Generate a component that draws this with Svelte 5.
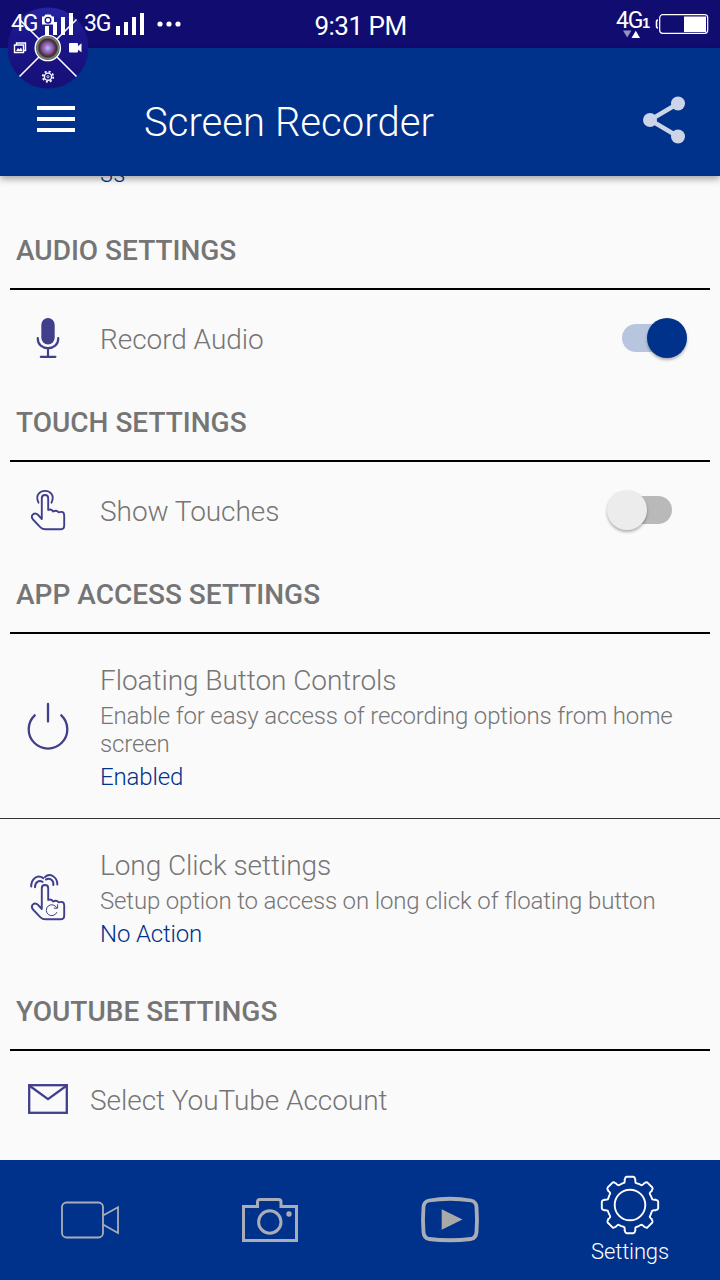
<script lang="ts">
  let recordAudio = $state(true);
  let showTouches = $state(false);

  const signalBars = [9, 13, 18, 22];

  function point(radius: number, degrees: number) {
    const a = (degrees * Math.PI) / 180;
    return `${(30 + radius * Math.cos(a)).toFixed(2)} ${(30 + radius * Math.sin(a)).toFixed(2)}`;
  }

  function gearPath(outer: number, root: number) {
    let d = '';
    for (let i = 0; i < 8; i++) {
      const a = i * 45 - 90;
      d += `${i ? 'L' : 'M'}${point(root, a - 14)} Q${point(root + 1.5, a - 12)} ${point(root + 3, a - 12)}`;
      d += `L${point(outer - 2, a - 11)} Q${point(outer, a - 10)} ${point(outer, a - 7)}`;
      d += `L${point(outer, a + 7)} Q${point(outer, a + 10)} ${point(outer - 2, a + 11)}`;
      d += `L${point(root + 3, a + 12)} Q${point(root + 1.5, a + 12)} ${point(root, a + 14)}`;
      d += `Q${point(root - 0.5, a + 17)} ${point(root - 0.2, a + 22.5)}`;
    }
    return d + 'Z';
  }

  const gear = gearPath(28.4, 23);
</script>

{#snippet signal()}
  <svg class="signal" width="28" height="22" viewBox="0 0 28 22" fill="#fff">
    {#each signalBars as h, i}
      <rect x={i * 8} y={22 - h} width="4" height={h} />
    {/each}
  </svg>
{/snippet}

{#snippet toggle(on: boolean)}
  <span class="track" class:on><span class="thumb"></span></span>
{/snippet}

<div class="screen">
  <header class="status">
    <div class="status-left">
      <span class="net net-4g">4G</span>
      {@render signal()}
      <span class="net net-3g">3G</span>
      {@render signal()}
      <svg class="dots" width="24" height="6" viewBox="0 0 24 6" fill="#fff">
        <circle cx="3" cy="3" r="2.6" /><circle cx="12" cy="3" r="2.6" /><circle cx="21" cy="3" r="2.6" />
      </svg>
    </div>
    <time>9:31 PM</time>
    <div class="status-right">
      <div class="data">
        <span class="net">4G</span><span class="sim">1</span>
        <svg class="arrows" width="18" height="8" viewBox="0 0 18 8">
          <path d="M0 0.5H8.5L4.2 7.5Z" fill="#9391c6" /><path d="M8.5 8H17L12.8 0.8Z" fill="#fff" />
        </svg>
      </div>
      <svg width="54" height="22" viewBox="0 0 54 22">
        <path d="M3 7Q1.5 7 1.5 9V13Q1.5 15 3 15" fill="none" stroke="#fff" stroke-width="1.6" />
        <rect x="4.7" y="1.7" width="48" height="18.6" rx="3" fill="none" stroke="#fff" stroke-width="1.2" />
        <rect x="29" y="3.5" width="22" height="15.5" fill="#fff" />
      </svg>
    </div>
  </header>

  <div class="app-bar">
    <button class="icon-btn" aria-label="Menu">
      <svg width="38" height="26" viewBox="0 0 38 26" fill="#fff">
        <rect width="38" height="4" /><rect y="11" width="38" height="4" /><rect y="22" width="38" height="4" />
      </svg>
    </button>
    <h1>Screen Recorder</h1>
    <button class="icon-btn share" aria-label="Share">
      <svg width="44" height="48" viewBox="0 0 44 48">
        <path d="M35 7.5L7 24L35 40.5" fill="none" stroke="#ccd4e8" stroke-width="4.4" />
        <g fill="#ccd4e8"><circle cx="35" cy="7.5" r="7" /><circle cx="7" cy="24" r="7" /><circle cx="35" cy="40.5" r="7" /></g>
      </svg>
    </button>
  </div>

  <main>
    <div class="scrolled"><span class="value">3s</span></div>

    <h2>AUDIO SETTINGS</h2>
    <button class="row" onclick={() => (recordAudio = !recordAudio)}>
      <span class="lead">
        <svg width="48" height="48" viewBox="0 0 48 48" fill="none" stroke="#403f8c" stroke-width="2.2" stroke-linecap="round">
          <rect x="17.3" y="4" width="13.4" height="26.5" rx="6.7" fill="#403f8c" stroke="none" />
          <path d="M13.8 24V25C13.8 30.5 18.4 34.2 24 34.2S34.2 30.5 34.2 25V24M24 34.5V42.6M16.8 42.8H31.4" />
        </svg>
      </span>
      <span class="title">Record Audio</span>
      {@render toggle(recordAudio)}
    </button>

    <h2>TOUCH SETTINGS</h2>
    <button class="row" onclick={() => (showTouches = !showTouches)}>
      <span class="lead">
        <svg width="48" height="48" viewBox="0 0 48 48" fill="none" stroke="#403f8c" stroke-width="1.9" stroke-linejoin="round" stroke-linecap="round">
          <path d="M14.5 16.7C10.5 8 17 4.9 21 4.9S31.5 8 27.5 16.7" />
          <path d="M17.8 33V12.2Q17.8 9 21 9T24.2 12.2V24Q27.5 22.4 29.2 25.5Q32.5 23.5 34.5 26.3Q40.2 24.5 40.2 29.5V39.5Q40.2 43.3 36.5 43.3H21.5Q18.5 43.3 16.5 41.3L9 33.5Q7 31 8.4 29Q10.8 26 14 28.8L17.8 33" />
        </svg>
      </span>
      <span class="title">Show Touches</span>
      {@render toggle(showTouches)}
    </button>

    <h2>APP ACCESS SETTINGS</h2>
    <div class="row tall divided">
      <span class="lead">
        <svg width="48" height="48" viewBox="0 0 48 48" fill="none" stroke="#403f8c" stroke-width="2.3" stroke-linecap="round">
          <path d="M10.7 13.3A19.3 19.3 0 1 0 37.3 13.3M24 2V19.5" />
        </svg>
      </span>
      <div class="text">
        <span class="title">Floating Button Controls</span>
        <p>Enable for easy access of recording options from home screen</p>
        <span class="value">Enabled</span>
      </div>
    </div>
    <div class="row tall">
      <span class="lead long-click">
        <svg width="48" height="48" viewBox="0 0 48 48" fill="none" stroke="#403f8c" stroke-width="1.9" stroke-linejoin="round" stroke-linecap="round">
          <path d="M17.8 33V12.2Q17.8 9 21 9T24.2 12.2V24Q27.5 22.4 29.2 25.5Q32.5 23.5 34.5 26.3Q40.2 24.5 40.2 29.5V39.5Q40.2 43.3 36.5 43.3H21.5Q18.5 43.3 16.5 41.3L9 33.5Q7 31 8.4 29Q10.8 26 14 28.8L17.8 33" />
          <path d="M7.2 10.5C7.2 3 13-2 19.3 2.2M11 11.2C11 6 15 3.8 18.6 5.8" stroke-width="2" />
          <path d="M21 1C26-3.5 33.5 1 33.3 8.5M22 3.5C26 1.5 30 4.5 29.3 9" stroke-width="2" />
          <path d="M32.8 36.5A5.5 5.5 0 1 1 32.6 31.5M33.6 28.7V32.2H30.2" stroke-width="1" />
        </svg>
      </span>
      <div class="text">
        <span class="title">Long Click settings</span>
        <p>Setup option to access on long click of floating button</p>
        <span class="value">No Action</span>
      </div>
    </div>

    <h2>YOUTUBE SETTINGS</h2>
    <div class="row account">
      <span class="lead">
        <svg width="48" height="48" viewBox="0 0 48 48" fill="none" stroke="#403f8c" stroke-width="2.3">
          <rect x="5.2" y="10.2" width="37.6" height="27.6" /><path d="M5.2 10.5L24 24.2L42.8 10.5" />
        </svg>
      </span>
      <span class="title">Select YouTube Account</span>
    </div>
  </main>

  <nav>
    <button aria-label="Videos">
      <svg width="60" height="60" viewBox="0 0 60 60" fill="none" stroke="#a9adb6" stroke-width="1.8">
        <rect x="2" y="12.5" width="41" height="35" rx="4.5" /><path d="M43 25.5L58 17.2V43L43 34.5" />
      </svg>
    </button>
    <button aria-label="Screenshots">
      <svg width="60" height="60" viewBox="0 0 60 60" fill="none" stroke="#a9adb6" stroke-width="3">
        <path d="M3.5 50.5V16.5H17.5V12Q17.5 9.5 20 9.5H38.5Q41 9.5 41 12V16.5H56.5V50.5Z" />
        <circle cx="29.8" cy="32" r="11.2" /><circle cx="49" cy="24" r="2.7" fill="#a9adb6" stroke="none" />
      </svg>
    </button>
    <button aria-label="YouTube">
      <svg width="60" height="60" viewBox="0 0 60 60">
        <path d="M9 10.5Q30 7 51 10.5Q56 11.5 56.5 17Q57.5 30 56.5 42Q56 48 51 49Q30 51.5 9 49Q4 48 3.5 42Q2.5 30 3.5 17Q4 11.5 9 10.5Z" fill="none" stroke="#a9adb6" stroke-width="3.8" />
        <path d="M21.7 19.2L42.5 29.5L21.7 39.8Z" fill="#a9a9a9" />
      </svg>
    </button>
    <button class="active">
      <svg width="60" height="60" viewBox="0 0 60 60" fill="none" stroke="#fff" stroke-width="1.9" stroke-linejoin="round">
        <path d={gear} /><circle cx="30" cy="30" r="15.3" />
      </svg>
      <span>Settings</span>
    </button>
  </nav>

  <div class="floating">
    <svg width="82" height="82" viewBox="0 0 82 82">
      <defs>
        <linearGradient id="disc" x1="0" y1="0" x2="0" y2="1">
          <stop offset="0" stop-color="#2626a2" /><stop offset="0.35" stop-color="#1a158a" /><stop offset="1" stop-color="#171077" />
        </linearGradient>
        <radialGradient id="lens">
          <stop offset="0" stop-color="#c8c4ee" /><stop offset="0.2" stop-color="#8592dc" /><stop offset="0.42" stop-color="#a34e96" />
          <stop offset="0.6" stop-color="#4d3961" /><stop offset="0.7" stop-color="#2f3335" /><stop offset="0.85" stop-color="#83846f" /><stop offset="1" stop-color="#45464b" />
        </radialGradient>
      </defs>
      <circle cx="41" cy="41" r="40.5" fill="url(#disc)" />
      <path d="M12.5 12.5L69.5 69.5M69.5 12.5L12.5 69.5" stroke="#fff" stroke-width="1.6" />
      <circle cx="40.8" cy="41" r="12.6" fill="url(#lens)" stroke="#fff" stroke-width="1.4" />
      <g fill="#fff">
        <path d="M35 9.5H37L38.5 7.5H43.5L45 9.5H47V17.5H35Z" />
        <rect x="62" y="36" width="9" height="9.5" rx="1" /><path d="M70 40L74.5 36.3V45.3L70 42Z" />
      </g>
      <circle cx="41" cy="13.2" r="2.8" fill="#fff" stroke="#1d188f" stroke-width="1.4" />
      <path d="M7.5 38V45.5H16.5V38ZM9.5 38V36H18.5V43.5H16.5" fill="none" stroke="#fff" stroke-width="1.4" />
      <path d="M9 44L11 41L12.5 42.5L14 40.5L15.5 44Z" fill="#fff" />
      <g fill="none" stroke="#fff">
        <circle cx="41" cy="69.7" r="3.6" stroke-width="1.4" /><circle cx="41" cy="69.7" r="1.1" stroke-width="0.8" />
        <circle cx="41" cy="69.7" r="5.2" stroke-width="1.8" stroke-dasharray="2 2.084" />
      </g>
    </svg>
  </div>
</div>

<style>
  :global(body) {
    background: #fafafa;
  }

  .screen {
    position: relative;
    isolation: isolate;
    display: flex;
    flex-direction: column;
    width: 720px;
    height: 1280px;
    overflow: hidden;
    background: #fafafa;
    color: #757575;
    font-family: Roboto, sans-serif;
    font-weight: 300;
  }

  button {
    border: 0;
    padding: 0;
    background: none;
    font: inherit;
    color: inherit;
    text-align: left;
  }

  svg {
    display: block;
    flex-shrink: 0;
    overflow: visible;
  }

  .status {
    display: grid;
    grid-template-columns: 1fr auto 1fr;
    align-items: center;
    height: 48px;
    padding: 0 11px;
    box-sizing: border-box;
    background: #110c70;
    color: #fff;
  }

  .status-left {
    z-index: 3;
    display: flex;
    align-items: center;
  }

  .net {
    font: 400 23px/24px Roboto, sans-serif;
    letter-spacing: -1.2px;
  }

  .net-4g {
    width: 34px;
  }

  .net-3g {
    width: 32px;
    margin-left: 11px;
  }

  .dots {
    margin-left: 13px;
  }

  time {
    font-size: 26px;
    line-height: 30px;
    font-weight: 400;
    letter-spacing: -0.5px;
    padding: 3px 0 0 1px;
  }

  .status-right {
    display: flex;
    justify-content: flex-end;
    align-items: center;
    gap: 5px;
  }

  .data {
    position: relative;
    display: flex;
    align-items: baseline;
    padding-bottom: 6px;
  }

  .sim {
    font: 700 14px/16px 'Liberation Sans', sans-serif;
  }

  .arrows {
    position: absolute;
    left: 7px;
    bottom: 1px;
  }

  .app-bar {
    z-index: 1;
    display: flex;
    align-items: center;
    height: 128px;
    padding: 0 33px 0 37px;
    box-sizing: border-box;
    background: #00318b;
    box-shadow: 0 3px 7px rgba(0, 0, 0, 0.35);
    color: #fff;
    flex-shrink: 0;
  }

  .icon-btn {
    padding-top: 14px;
  }

  h1 {
    margin: 21px 0 0 69px;
    font-size: 40px;
    line-height: 48px;
    font-weight: 300;
    letter-spacing: 0.05px;
  }

  .share {
    margin-left: auto;
    padding-top: 16px;
  }

  main {
    flex: 1;
    overflow: hidden;
  }

  .scrolled {
    display: flex;
    align-items: flex-end;
    height: 12px;
    margin-bottom: 26px;
    padding-left: 100px;
  }

  h2 {
    height: 74px;
    margin: 0 10px;
    padding-left: 6px;
    border-bottom: 2px solid #000;
    font-size: 28px;
    line-height: 73px;
    font-weight: 500;
  }

  .row {
    display: flex;
    align-items: center;
    width: 100%;
    height: 96px;
    padding: 0 16px 0 24px;
    box-sizing: border-box;
  }

  .lead {
    width: 76px;
    flex-shrink: 0;
  }

  .long-click {
    padding-top: 5px;
  }

  .title {
    font-size: 28px;
    line-height: 34px;
    letter-spacing: -0.05px;
    padding-top: 4px;
  }

  .tall {
    height: 156px;
  }

  .divided {
    height: 185px;
    border-bottom: 1px solid #333;
  }

  .account .lead {
    width: 66px;
  }

  .text {
    display: flex;
    flex-direction: column;
    padding-top: 3px;
  }

  .text .title {
    padding-top: 0;
  }

  p {
    margin: 4px 0 5px;
    font-size: 24px;
    line-height: 28px;
    letter-spacing: -0.15px;
  }

  .value {
    color: #00318b;
    font-size: 24px;
    line-height: 28px;
    letter-spacing: -0.15px;
  }

  .track {
    display: flex;
    align-items: center;
    width: 50px;
    height: 28px;
    margin-left: auto;
    margin-right: 32px;
    border-radius: 14px;
    background: #b9b9b9;
  }

  .thumb {
    width: 40px;
    height: 40px;
    margin-left: -15px;
    flex-shrink: 0;
    border-radius: 50%;
    background: #ececec;
    box-shadow: 0 2px 3px rgba(0, 0, 0, 0.3);
  }

  .on {
    background: #b8c5df;
  }

  .on .thumb {
    margin-left: 25px;
    background: #00318b;
  }

  nav {
    display: grid;
    grid-template-columns: repeat(4, 1fr);
    height: 120px;
    flex-shrink: 0;
    background: #00318b;
    color: #fff;
  }

  nav button {
    display: flex;
    flex-direction: column;
    align-items: center;
    justify-content: center;
  }

  .active {
    justify-content: flex-start;
    padding-top: 15px;
    font-size: 22px;
    line-height: 34px;
    letter-spacing: -0.15px;
  }

  .floating {
    position: absolute;
    z-index: 2;
    left: 7px;
    top: 7px;
  }
</style>
